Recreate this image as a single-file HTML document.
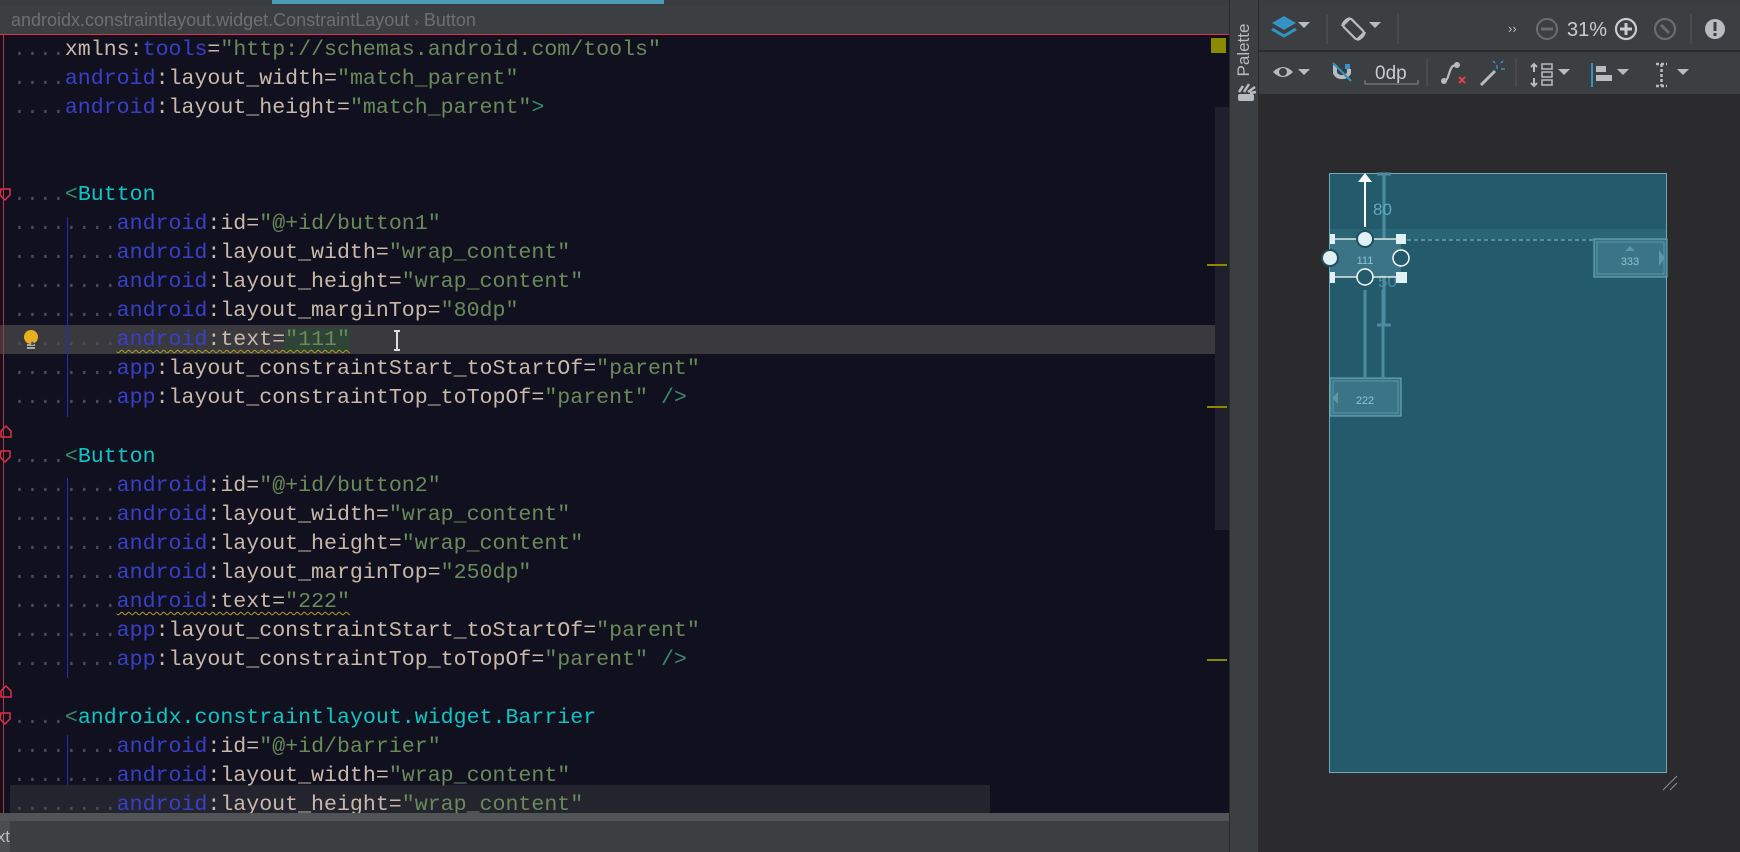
<!DOCTYPE html>
<html><head><meta charset="utf-8"><style>
*{margin:0;padding:0;box-sizing:border-box}
body{width:1740px;height:852px;overflow:hidden;background:#2b2b2d;position:relative;font-family:"Liberation Sans",sans-serif}
.a{position:absolute}
#code{position:absolute;left:0;top:35px;width:1229px;height:778px;background:#10101f;overflow:hidden}
.l{position:absolute;left:13px;height:29px;line-height:29px;font-family:"Liberation Mono",monospace;font-size:21.6px;white-space:pre;color:#c9b9aa}
.d{color:#4a4a58}.n{color:#3a3fc8}.s{color:#6a8a5a}.t{color:#11c4c4}.p{color:#3a8a6a}
.w{text-decoration:underline wavy #b0a020;text-decoration-thickness:1px;text-underline-offset:4px}
.tb{fill:none;stroke:#b8bcc0;stroke-width:2.2}
</style></head><body>
<div class="a" style="left:0;top:0;width:1229px;height:6px;background:#3a3d40"></div>
<div class="a" style="left:272px;top:0;width:392px;height:4px;background:#4a9bb8"></div>
<div class="a" style="left:0;top:6px;width:1229px;height:28px;background:#3c3f41;color:#6c6f72;font-size:18px;line-height:28px;padding-left:11px">androidx.constraintlayout.widget.ConstraintLayout <span style="font-size:14px">›</span> Button</div>
<div class="a" style="left:0;top:34px;width:1229px;height:2px;background:#e0304a"></div>
<div id="code">
<div class="a" style="left:0;top:290px;width:1228px;height:29px;background:#3a3a3e"></div>
<div class="a" style="left:3px;top:0;width:1px;height:778px;background:#c0303e"></div>
<div class="a" style="left:67px;top:182px;width:1px;height:200px;background:#2828c8"></div>
<div class="a" style="left:67px;top:443px;width:1px;height:200px;background:#2828c8"></div>
<div class="a" style="left:67px;top:700px;width:1px;height:80px;background:#2828c8"></div>
<div class="a" style="left:1211px;top:3px;width:15px;height:15px;background:#8a8a00"></div>
<div class="a" style="left:1215px;top:72px;width:14px;height:423px;background:#20202c"></div>
<div class="a" style="left:1207px;top:229px;width:20px;height:2px;background:#8a8a00"></div>
<div class="a" style="left:1207px;top:371px;width:20px;height:2px;background:#8a8a00"></div>
<div class="a" style="left:1207px;top:624px;width:20px;height:2px;background:#8a8a00"></div>
<div class="a" style="left:10px;top:750px;width:980px;height:28px;background:#24242e"></div>
<svg class="a" style="left:22px;top:294px" width="18" height="22"><circle cx="9" cy="8" r="7" fill="#e8b020"/><rect x="5" y="15" width="8" height="2" fill="#aaa"/><rect x="5" y="18" width="8" height="2" fill="#aaa"/></svg>
<svg class="a" style="left:392px;top:295px" width="10" height="22"><path d="M2 1h6M5 1v19M2 20h6" stroke="#ddd" stroke-width="2"/></svg>
<svg class="a" style="left:0;top:0" width="12" height="778">
<g fill="none" stroke="#e0304a" stroke-width="1.5"><path d="M1 154h9v6l-5 5-5-5z"/><path d="M1 396l5-5 5 5v6h-10z"/><path d="M1 416h9v6l-5 5-5-5z"/><path d="M1 656l5-5 5 5v6h-10z"/><path d="M1 678h9v6l-5 5-5-5z"/></g></svg>
<div class="l" style="top:1px"><span class="d">....</span>xmlns:<span class="n">tools</span>=<span class="s">"http://schemas.android.com/tools"</span></div>
<div class="l" style="top:30px"><span class="d">....</span><span class="n">android</span>:layout_width=<span class="s">"match_parent"</span></div>
<div class="l" style="top:59px"><span class="d">....</span><span class="n">android</span>:layout_height=<span class="s">"match_parent"</span><span class="p">&gt;</span></div>
<div class="l" style="top:146px"><span class="d">....</span><span class="p">&lt;</span><span class="t">Button</span></div>
<div class="l" style="top:175px"><span class="d">........</span><span class="n">android</span>:id=<span class="s">"@+id/button1"</span></div>
<div class="l" style="top:204px"><span class="d">........</span><span class="n">android</span>:layout_width=<span class="s">"wrap_content"</span></div>
<div class="l" style="top:233px"><span class="d">........</span><span class="n">android</span>:layout_height=<span class="s">"wrap_content"</span></div>
<div class="l" style="top:262px"><span class="d">........</span><span class="n">android</span>:layout_marginTop=<span class="s">"80dp"</span></div>
<div class="l" style="top:291px"><span class="d">........</span><span class="w"><span class="n">android</span>:text=<span class="s" style="background:#2e4436">"111"</span></span></div>
<div class="l" style="top:320px"><span class="d">........</span><span class="n">app</span>:layout_constraintStart_toStartOf=<span class="s">"parent"</span></div>
<div class="l" style="top:349px"><span class="d">........</span><span class="n">app</span>:layout_constraintTop_toTopOf=<span class="s">"parent"</span> <span class="p">/&gt;</span></div>
<div class="l" style="top:408px"><span class="d">....</span><span class="p">&lt;</span><span class="t">Button</span></div>
<div class="l" style="top:437px"><span class="d">........</span><span class="n">android</span>:id=<span class="s">"@+id/button2"</span></div>
<div class="l" style="top:466px"><span class="d">........</span><span class="n">android</span>:layout_width=<span class="s">"wrap_content"</span></div>
<div class="l" style="top:495px"><span class="d">........</span><span class="n">android</span>:layout_height=<span class="s">"wrap_content"</span></div>
<div class="l" style="top:524px"><span class="d">........</span><span class="n">android</span>:layout_marginTop=<span class="s">"250dp"</span></div>
<div class="l" style="top:553px"><span class="d">........</span><span class="w"><span class="n">android</span>:text=<span class="s">"222"</span></span></div>
<div class="l" style="top:582px"><span class="d">........</span><span class="n">app</span>:layout_constraintStart_toStartOf=<span class="s">"parent"</span></div>
<div class="l" style="top:611px"><span class="d">........</span><span class="n">app</span>:layout_constraintTop_toTopOf=<span class="s">"parent"</span> <span class="p">/&gt;</span></div>
<div class="l" style="top:669px"><span class="d">....</span><span class="p">&lt;</span><span class="t">androidx.constraintlayout.widget.Barrier</span></div>
<div class="l" style="top:698px"><span class="d">........</span><span class="n">android</span>:id=<span class="s">"@+id/barrier"</span></div>
<div class="l" style="top:727px"><span class="d">........</span><span class="n">android</span>:layout_width=<span class="s">"wrap_content"</span></div>
<div class="l" style="top:756px"><span class="d">........</span><span class="n">android</span>:layout_height=<span class="s">"wrap_content"</span></div>
</div>
<div class="a" style="left:0;top:813px;width:1229px;height:8px;background:#505456"></div>
<div class="a" style="left:0;top:821px;width:1229px;height:31px;background:#3c3f41"></div>
<div class="a" style="left:0;top:821px;width:10px;height:31px;background:#4a4d50;color:#bbb;font-size:17px;line-height:31px;overflow:hidden;direction:rtl">xt</div>
<div class="a" style="left:1229px;top:0;width:1px;height:852px;background:#2a2a2a"></div>
<div class="a" style="left:1230px;top:0;width:28px;height:852px;background:#3c3f41"></div>
<div class="a" style="left:1244px;top:50px;transform:translate(-50%,-50%) rotate(-90deg);color:#b8bcc0;font-size:17px;white-space:nowrap">Palette</div>
<svg class="a" style="left:1237px;top:82px" width="20" height="20"><rect x="1" y="12" width="16" height="7" rx="2" fill="#b8bcc0"/><path d="M2 10l4-6M7 10l5-8M11 10l7-5M13 11l6-1" stroke="#b8bcc0" stroke-width="2.5"/></svg>
<div class="a" style="left:1259px;top:0;width:481px;height:7px;background:#3a3d40"></div>
<div class="a" style="left:1259px;top:7px;width:481px;height:44px;background:#3c3f41;border-bottom:1px solid #2b2b2b"></div>
<div class="a" style="left:1259px;top:52px;width:481px;height:43px;background:#3c3f41;border-bottom:1px solid #2b2b2b"></div>
<svg class="a" style="left:1259px;top:7px" width="481" height="88">
<path d="M13 16l12-7 12 7-12 7z" fill="#3592c4"/><path d="M13 22l12 7 12-7" stroke="#3592c4" stroke-width="3" fill="none"/>
<path d="M39 15h12l-6 6z M110 15h12l-6 6z M39 62h12l-6 6z M299 62h12l-6 6z M358 62h12l-6 6z M418 62h12l-6 6z" fill="#b8bcc0"/>
<line x1="68" y1="7" x2="68" y2="37" stroke="#555"/><line x1="139" y1="7" x2="139" y2="37" stroke="#555"/><line x1="432" y1="7" x2="432" y2="37" stroke="#555"/>
<rect x="89" y="12" width="11" height="20" rx="2" transform="rotate(-45 94.5 22)" class="tb"/><path d="M83 19a12 12 0 0 1 8-8M106 25a12 12 0 0 1-8 8" class="tb"/>
<text x="249" y="26" fill="#b8bcc0" font-size="13" font-family="Liberation Sans">››</text>
<circle cx="288" cy="22" r="10" fill="none" stroke="#6a6d70" stroke-width="2"/><rect x="282" y="20.5" width="12" height="3" fill="#6a6d70"/>
<text x="308" y="29" fill="#c8ccd0" font-size="20" font-family="Liberation Sans">31%</text>
<circle cx="367" cy="22" r="10" fill="none" stroke="#c8ccd0" stroke-width="2.2"/><path d="M361 22h12M367 16v12" stroke="#c8ccd0" stroke-width="3"/>
<circle cx="406" cy="22" r="10" fill="none" stroke="#6a6d70" stroke-width="2.2"/><path d="M402 18l8 8" stroke="#6a6d70" stroke-width="3"/>
<circle cx="456" cy="22" r="10" fill="#b8bcc0"/><rect x="454.5" y="15" width="3" height="9" fill="#3c3f41"/><rect x="454.5" y="26" width="3" height="3" fill="#3c3f41"/>
<path d="M14 65q10-10 20 0q-10 10-20 0z" fill="#b8bcc0"/><circle cx="24" cy="65" r="4" fill="#3c3f41"/>
<path d="M76 58v8a8 8 0 0 0 14 0v-4" class="tb" style="stroke-width:4"/><path d="M74 56l18 18" stroke="#3592c4" stroke-width="2"/><rect x="86" y="57" width="5" height="5" fill="#3592c4"/>
<text x="116" y="72" fill="#c8ccd0" font-size="19" font-family="Liberation Sans">0dp</text><path d="M106 73v4h53v-4" stroke="#888" fill="none"/>
<line x1="168" y1="52" x2="168" y2="80" stroke="#555"/><line x1="257" y1="52" x2="257" y2="80" stroke="#555"/>
<path d="M185 74c6 0 4-16 12-16" class="tb"/><circle cx="185" cy="74" r="3" fill="#b8bcc0"/><circle cx="198" cy="58" r="3" fill="#b8bcc0"/><path d="M200 70l6 6M206 70l-6 6" stroke="#e04040" stroke-width="2"/>
<path d="M222 78l14-14" stroke="#b8bcc0" stroke-width="3"/><path d="M238 58v4M242 62h4M236 56l-2-2M242 56l2-2" stroke="#3592c4" stroke-width="1.5"/>
<path d="M275 57v8M272 60l3-3 3 3M275 79v-8M272 76l3 3 3-3" stroke="#b8bcc0" stroke-width="2"/><rect x="283" y="57" width="10" height="5" class="tb" style="stroke-width:1.5"/><rect x="283" y="65" width="10" height="5" class="tb" style="stroke-width:1.5"/><rect x="283" y="73" width="10" height="5" class="tb" style="stroke-width:1.5"/>
<line x1="333" y1="56" x2="333" y2="80" stroke="#3592c4" stroke-width="2"/><rect x="337" y="59" width="10" height="6" fill="#b8bcc0"/><rect x="337" y="68" width="16" height="6" fill="#b8bcc0"/>
<path d="M397 57h11M397 79h11M402.5 57v22" stroke="#b8bcc0" stroke-width="2.5" stroke-dasharray="3 2"/>
</svg>
<div class="a" style="left:1329px;top:173px;width:338px;height:600px;background:#235a6c;border:1px solid #6fa9bb"></div>
<div class="a" style="left:1330px;top:229px;width:336px;height:10px;background:#2a6577"></div>
<svg class="a" style="left:1320px;top:160px" width="360" height="640">
<path d="M80 80h194" stroke="#8cc4d4" stroke-dasharray="4 3"/>
<path d="M64 14v150M57 14h14M57 165h14" stroke="#4d8ca0" stroke-width="3"/>
<text x="53" y="55" fill="#5fa9bf" font-size="17" font-family="Liberation Sans">80</text>
<rect x="10" y="79" width="71" height="38" fill="#3b7486"/>
<rect x="274" y="79" width="73" height="38" fill="#3b7486" stroke="#6fb0c2"/><rect x="277" y="82" width="67" height="32" fill="none" stroke="#5a98aa"/>
<text x="310" y="105" fill="#8cc4d4" font-size="11" text-anchor="middle" font-family="Liberation Sans">333</text>
<path d="M305 91l5-5 5 5zM339 90l6 8-6 8z" fill="#5a98aa"/>
<rect x="10" y="218" width="71" height="38" fill="#3b7486" stroke="#6fb0c2"/><rect x="13" y="221" width="65" height="32" fill="none" stroke="#5a98aa"/>
<text x="45" y="244" fill="#8cc4d4" font-size="11" text-anchor="middle" font-family="Liberation Sans">222</text><path d="M12 238l6-6v12z" fill="#5a98aa"/>
<path d="M45 130v88M63 130v88" stroke="#4d8ca0" stroke-width="3"/>
<text x="45" y="104" fill="#8cc4d4" font-size="11" text-anchor="middle" font-family="Liberation Sans">111</text>
<text x="58" y="127" fill="#4d8ca0" font-size="17" font-family="Liberation Sans">50</text>
<path d="M45 67v-52" stroke="#fff" stroke-width="2"/><path d="M38 22l7-9 7 9z" fill="#fff"/>
<path d="M10 79h71M10 117h71" stroke="#fff" stroke-width="1.2"/>
<circle cx="45" cy="79" r="8" fill="#e0f0f5" stroke="#1d4f5f" stroke-width="2"/>
<circle cx="10" cy="98" r="8" fill="#e0f0f5" stroke="#1d4f5f" stroke-width="2"/>
<circle cx="81" cy="98" r="8" fill="#235a6c" stroke="#fff" stroke-width="1.5"/>
<circle cx="45" cy="117" r="8" fill="#235a6c" stroke="#fff" stroke-width="1.5"/>
<rect x="10" y="74" width="5" height="10" fill="#e0f0f5"/><rect x="76" y="74" width="10" height="10" fill="#e0f0f5"/>
<rect x="10" y="112" width="5" height="11" fill="#e0f0f5"/><rect x="76" y="112" width="11" height="11" fill="#e0f0f5"/>
<path d="M343 630l14-14M350 630l7-7" stroke="#888" stroke-width="1.2"/>
</svg>
</body></html>
